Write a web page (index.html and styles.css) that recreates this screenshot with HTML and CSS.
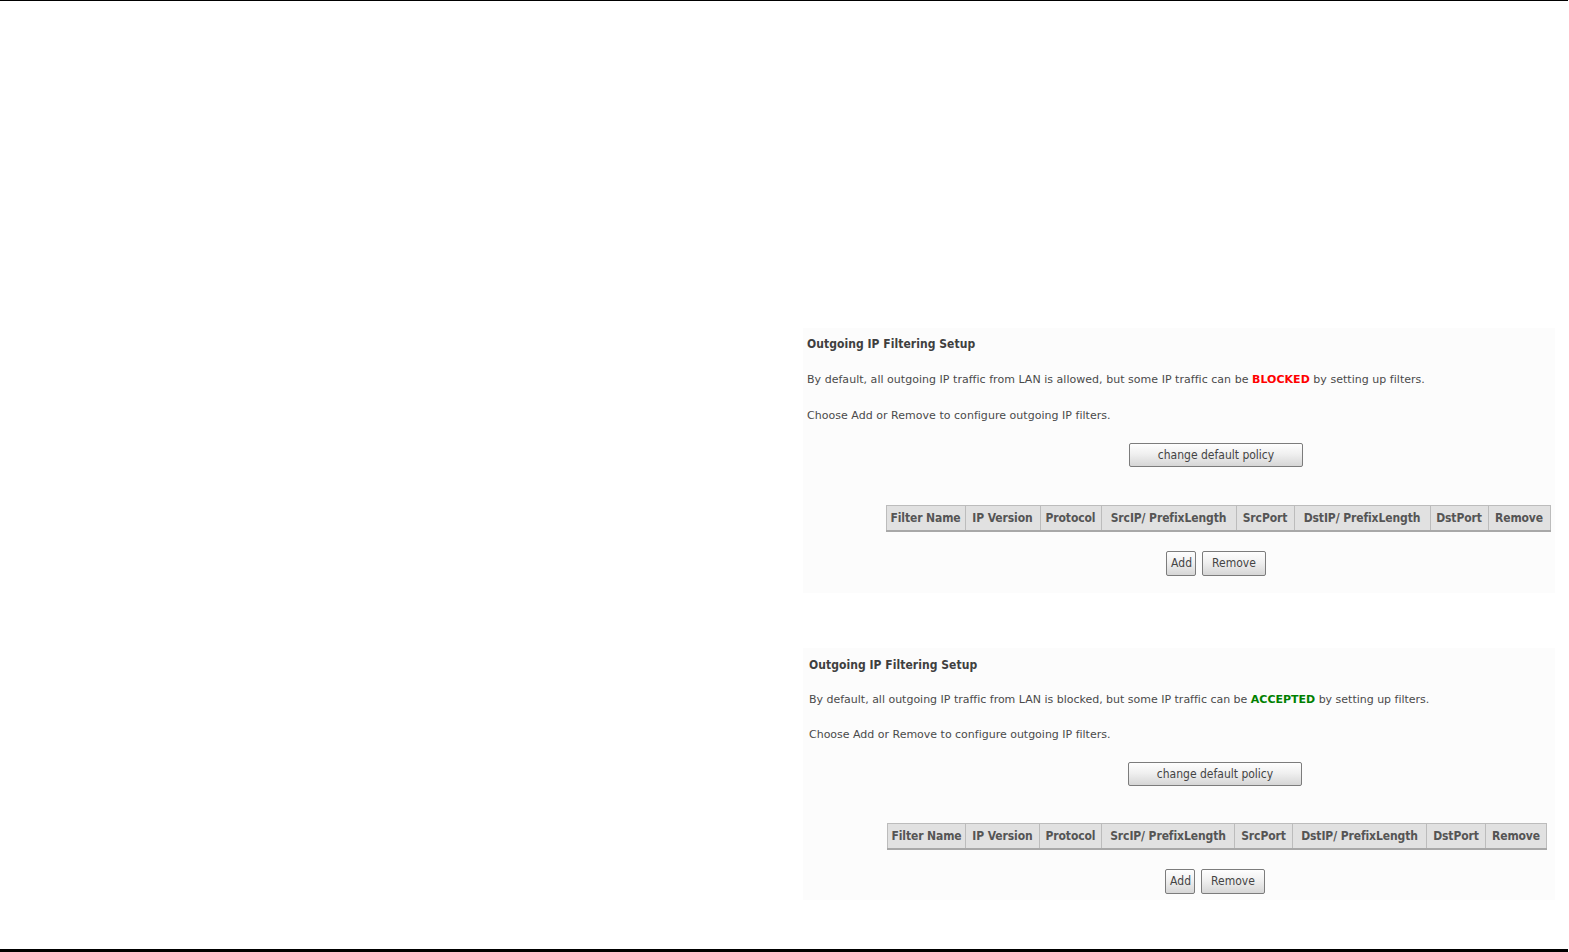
FILE: index.html
```html
<!DOCTYPE html>
<html lang="en">
<head>
  <meta charset="UTF-8">
  <title>Outgoing IP Filtering Setup</title>
  <link rel="stylesheet" href="styles.css">
</head>
<body>
  <div class="page">
    <section class="panel first">
      <div class="inner">
        <h2>Outgoing IP Filtering Setup</h2>
        <p>By default, all outgoing IP traffic from LAN is allowed, but some IP traffic can be <b class="blocked">BLOCKED</b> by setting up filters.</p>
        <p>Choose Add or Remove to configure outgoing IP filters.</p>
        <div class="center">
          <button class="btn policy">change default policy</button>
          <table class="filters">
            <tr>
              <th>Filter Name</th><th>IP Version</th><th>Protocol</th><th>SrcIP/ PrefixLength</th>
              <th>SrcPort</th><th>DstIP/ PrefixLength</th><th>DstPort</th><th>Remove</th>
            </tr>
          </table>
          <div class="actions">
            <button class="btn small">Add</button>
            <button class="btn">Remove</button>
          </div>
        </div>
      </div>
    </section>

    <section class="panel second">
      <div class="inner">
        <h2>Outgoing IP Filtering Setup</h2>
        <p>By default, all outgoing IP traffic from LAN is blocked, but some IP traffic can be <b class="accepted">ACCEPTED</b> by setting up filters.</p>
        <p>Choose Add or Remove to configure outgoing IP filters.</p>
        <div class="center">
          <button class="btn policy">change default policy</button>
          <table class="filters">
            <tr>
              <th>Filter Name</th><th>IP Version</th><th>Protocol</th><th>SrcIP/ PrefixLength</th>
              <th>SrcPort</th><th>DstIP/ PrefixLength</th><th>DstPort</th><th>Remove</th>
            </tr>
          </table>
          <div class="actions">
            <button class="btn small">Add</button>
            <button class="btn">Remove</button>
          </div>
        </div>
      </div>
    </section>
  </div>
</body>
</html>
```

FILE: styles.css
```css
html, body {
  margin: 0;
  padding: 0;
  width: 100%;
  height: 100%;
  background: #fff;
  overflow: hidden;
  font-family: 'DejaVu Sans', Verdana, sans-serif;
  color: #4a4a4a;
}

.page {
  box-sizing: border-box;
  width: 1568px;
  height: 952px;
  border-top: 1px solid #000;
  border-bottom: 3px solid #000;
  padding-top: 327px;
}

.panel {
  margin-left: 803px;
  width: 752px;
  background: #fcfcfc;
}

.first {
  height: 265px;
}

.second {
  margin-top: 55px;
  height: 252px;
}

.inner {
  width: 818px;
  padding-left: 4px;
}

.first .inner {
  padding-top: 8px;
}

.second .inner {
  padding-top: 9px;
}

.second h2,
.second p {
  padding-left: 2px;
}

.second .center {
  margin-left: -2px;
}

h2 {
  margin: 0;
  font-family: 'DejaVu Sans Condensed', 'DejaVu Sans', sans-serif;
  font-size: 12px;
  line-height: 16px;
  font-weight: bold;
  color: #3f3f3f;
  letter-spacing: 0.05px;
}

p {
  margin: 20px 0 0;
  font-size: 11px;
  line-height: 16px;
  letter-spacing: 0.03px;
}

.second p {
  margin-top: 19px;
  letter-spacing: -0.01px;
}

.blocked {
  color: #f00;
}

.accepted {
  color: #008000;
}

.center {
  display: flex;
  flex-direction: column;
  align-items: center;
  padding-top: 19px;
}

.btn {
  height: 25px;
  padding: 0 9px;
  font-family: 'DejaVu Sans Condensed', 'DejaVu Sans', sans-serif;
  font-size: 12px;
  color: #444;
  border: 1px solid #7c7c7c;
  border-radius: 2px;
  background: linear-gradient(#fefefe, #f0f0f0 45%, #d6d6d6);
  cursor: pointer;
}

.btn.policy {
  width: 174px;
  height: 24px;
}

.btn.small {
  padding: 0 4px;
  width: 30px;
}

.filters {
  margin-top: 38px;
  border-collapse: collapse;
  background: #e1e1e1;
  table-layout: fixed;
}

.first .filters {
  margin-left: 4px;
}

.second .filters {
  margin-top: 37px;
  margin-left: 4px;
}

.filters th {
  box-sizing: border-box;
  height: 25px;
  padding: 0;
  border: 1px solid #bcbcbc;
  font-size: 12px;
  font-weight: bold;
  color: #555;
  white-space: nowrap;
  letter-spacing: -0.1px;
  font-family: 'DejaVu Sans Condensed', 'DejaVu Sans', sans-serif;
}

.first th:nth-child(1) { width: 79px; }
.first th:nth-child(2) { width: 75px; }
.first th:nth-child(3) { width: 61px; }
.first th:nth-child(4) { width: 135px; }
.first th:nth-child(5) { width: 58px; }
.first th:nth-child(6) { width: 136px; }
.first th:nth-child(7) { width: 58px; }
.first th:nth-child(8) { width: 62px; }

.second th:nth-child(1) { width: 78px; }
.second th:nth-child(2) { width: 74px; }
.second th:nth-child(3) { width: 62px; }
.second th:nth-child(4) { width: 133px; }
.second th:nth-child(5) { width: 58px; }
.second th:nth-child(6) { width: 134px; }
.second th:nth-child(7) { width: 59px; }
.second th:nth-child(8) { width: 61px; }

.filters tr {
  border-bottom: 2px solid #a8a8a8;
}

.actions {
  display: flex;
  gap: 6px;
  margin-top: 19px;
}
```
